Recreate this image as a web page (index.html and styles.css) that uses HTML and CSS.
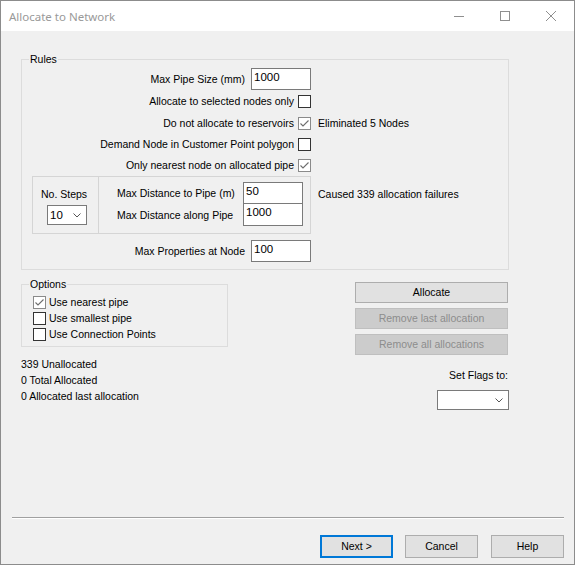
FILE: index.html
```html
<!DOCTYPE html>
<html>
<head>
<meta charset="utf-8">
<title>Allocate to Network</title>
<link rel="stylesheet" href="styles.css">
</head>
<body>
<div class="window">
  <div class="titlebar">
    <span class="title">Allocate to Network</span>
    <div class="controls">
      <span class="ctl"><svg width="10" height="10" viewBox="0 0 10 10"><line x1="0" y1="5.5" x2="10" y2="5.5"/></svg></span>
      <span class="ctl"><svg width="10" height="10" viewBox="0 0 10 10"><rect x="0.5" y="0.5" width="9" height="9"/></svg></span>
      <span class="ctl"><svg width="10" height="10" viewBox="0 0 10 10"><path d="M0 0L10 10M10 0L0 10"/></svg></span>
    </div>
  </div>

  <div class="content">
    <div class="group rules">
      <div class="group-title">Rules</div>

      <div class="row r1">
        <div class="lcol"><span class="lbl">Max Pipe Size (mm)</span><div class="input">1000</div></div>
      </div>
      <div class="row r2">
        <div class="lcol"><span class="lbl-cb">Allocate to selected nodes only</span><span class="cb"></span></div>
      </div>
      <div class="row r3">
        <div class="lcol"><span class="lbl-cb">Do not allocate to reservoirs</span><span class="cb on"><svg width="11" height="11" viewBox="0 0 11 11"><path d="M1.5 5.5L4 8L9.5 2.5"/></svg></span></div>
        <span class="note">Eliminated 5 Nodes</span>
      </div>
      <div class="row r4">
        <div class="lcol"><span class="lbl-cb">Demand Node in Customer Point polygon</span><span class="cb"></span></div>
      </div>
      <div class="row r5">
        <div class="lcol"><span class="lbl-cb">Only nearest node on allocated pipe</span><span class="cb on"><svg width="11" height="11" viewBox="0 0 11 11"><path d="M1.5 5.5L4 8L9.5 2.5"/></svg></span></div>
      </div>

      <div class="steps-row">
        <div class="stepbox">
          <div class="stepcell">
            <div class="steps-lbl">No. Steps</div>
            <div class="combo steps-combo"><span>10</span><svg width="8" height="5" viewBox="0 0 8 5"><path d="M0.5 0.5L4 4L7.5 0.5"/></svg></div>
          </div>
          <div class="distcell">
            <span class="glbl">Max Distance to Pipe (m)</span>
            <div class="input">50</div>
            <span class="glbl">Max Distance along Pipe</span>
            <div class="input second">1000</div>
          </div>
        </div>
        <span class="note fail">Caused 339 allocation failures</span>
      </div>

      <div class="row r6">
        <div class="lcol"><span class="lbl">Max Properties at Node</span><div class="input">100</div></div>
      </div>
    </div>

    <div class="lower">
      <div class="leftcol">
        <div class="group options">
          <div class="group-title">Options</div>
          <div class="opts">
            <div class="opt"><span class="cb on"><svg width="11" height="11" viewBox="0 0 11 11"><path d="M1.5 5.5L4 8L9.5 2.5"/></svg></span><span>Use nearest pipe</span></div>
            <div class="opt"><span class="cb"></span><span>Use smallest pipe</span></div>
            <div class="opt"><span class="cb"></span><span>Use Connection Points</span></div>
          </div>
        </div>
        <div class="status">
          <div>339 Unallocated</div>
          <div>0 Total Allocated</div>
          <div>0 Allocated last allocation</div>
        </div>
      </div>
      <div class="rightcol">
        <div class="btn wide">Allocate</div>
        <div class="btn wide disabled">Remove last allocation</div>
        <div class="btn wide disabled">Remove all allocations</div>
        <div class="flags-lbl">Set Flags to:</div>
        <div class="combo flags-combo"><span></span><svg width="8" height="5" viewBox="0 0 8 5"><path d="M0.5 0.5L4 4L7.5 0.5"/></svg></div>
      </div>
    </div>
  </div>

  <div class="footer">
    <div class="sep"></div>
    <div class="btns">
      <div class="btn fbtn default">Next &gt;</div>
      <div class="btn fbtn">Cancel</div>
      <div class="btn fbtn help">Help</div>
    </div>
  </div>
</div>
</body>
</html>
```

FILE: styles.css
```css
html, body {
  margin: 0;
  padding: 0;
  background: #f0f0f0;
}

body {
  font-family: "Liberation Sans", Arial, sans-serif;
  font-size: 10.5px;
  line-height: 13px;
  color: #000;
}

.window {
  width: 575px;
  height: 565px;
  box-sizing: border-box;
  border: 1px solid #8c8c8c;
  background: #f0f0f0;
  display: flex;
  flex-direction: column;
  overflow: hidden;
}

/* title bar */
.titlebar {
  flex: none;
  height: 30px;
  background: #fff;
  display: flex;
  align-items: center;
}

.title {
  flex: 1;
  padding-left: 8px;
  font-family: "Noto Sans", "Open Sans", sans-serif;
  font-size: 11.5px;
  color: #999;
}

.controls {
  display: flex;
  align-self: stretch;
}

.ctl {
  width: 46px;
  display: flex;
  align-items: center;
  justify-content: center;
}

.ctl svg {
  stroke: #8f8f8f;
  stroke-width: 1;
  fill: none;
  display: block;
}

/* content */
.content {
  flex: 1;
  padding-left: 20px;
}

.group {
  box-sizing: border-box;
  border: 1px solid #dcdcdc;
  display: flex;
  flex-direction: column;
}

.group-title {
  align-self: flex-start;
  height: 13px;
  line-height: 13px;
  margin: -7px 0 0 7px;
  padding: 0 1px;
  background: #f0f0f0;
}

.rules {
  margin-top: 28px;
  width: 488px;
  padding-bottom: 7px;
}

.row {
  display: flex;
  align-items: center;
}

.lcol {
  width: 289px;
  display: flex;
  justify-content: flex-end;
  align-items: center;
}

.r1 { height: 22px; margin-top: 2px; }
.r2 { height: 22px; }
.r3 { height: 22px; }
.r4 { height: 21px; }
.r5 { height: 21px; }
.r6 { height: 22px; margin-top: 6px; }

.lbl { margin-right: 6px; }
.lbl-cb { margin-right: 4px; }

.note { margin-left: 7px; }

.input {
  box-sizing: border-box;
  width: 60px;
  height: 22px;
  border: 1px solid #7a7a7a;
  background: #fff;
  padding: 2px 0 0 2px;
  line-height: 13px;
  font-size: 11.5px;
}

.cb {
  box-sizing: border-box;
  width: 13px;
  height: 13px;
  border: 1px solid #333;
  background: #fff;
  display: inline-block;
  flex: none;
}

.cb svg {
  display: block;
  fill: none;
  stroke: #6d6d6d;
  stroke-width: 1.1;
}

.cb.on {
  border-color: #8a8a8a;
}

/* steps box */
.steps-row {
  display: flex;
  align-items: flex-start;
  margin-left: 10px;
}

.stepbox {
  box-sizing: border-box;
  width: 279px;
  height: 58px;
  border: 1px solid #d5d5d5;
  display: flex;
}

.stepcell {
  flex: none;
  box-sizing: border-box;
  border-right: 1px solid #d5d5d5;
  width: 66px;
  padding: 11px 0 0 8px;
}

.steps-lbl {
  line-height: 13px;
  height: 13px;
}

.combo {
  box-sizing: border-box;
  height: 20px;
  border: 1px solid #7a7a7a;
  background: #fff;
  display: flex;
  align-items: center;
  justify-content: space-between;
  padding: 0 5px 0 2px;
  font-size: 11.5px;
}

.combo svg {
  display: block;
  fill: none;
  stroke: #555;
  stroke-width: 1;
}

.steps-combo {
  width: 40px;
  margin: 4px 0 0 6px;
}

.distcell {
  flex: 1;
  padding: 5px 0 0 18px;
  display: grid;
  grid-template-columns: 126px 60px;
  grid-template-rows: 22px 22px;
}

.glbl {
  align-self: center;
}

.input.second {
  margin-top: -1px;
  height: 23px;
}

.note.fail {
  padding-top: 12px;
}

/* lower area */
.lower {
  display: flex;
  margin-top: 12px;
}

.leftcol {
  width: 334px;
  flex: none;
}

.options {
  margin-top: 2px;
  width: 207px;
  height: 63px;
}

.opts {
  margin-top: 3px;
  padding-left: 11px;
}

.opt {
  height: 16px;
  display: flex;
  align-items: center;
  gap: 3px;
}

.status {
  margin-top: 9px;
  line-height: 16px;
}

.rightcol {
  width: 153px;
  display: flex;
  flex-direction: column;
}

.btn {
  box-sizing: border-box;
  background: #e1e1e1;
  border: 1px solid #adadad;
  display: flex;
  align-items: center;
  justify-content: center;
  color: #000;
}

.btn.wide {
  height: 21px;
  margin-bottom: 5px;
}

.btn.wide.disabled {
  background: #cccccc;
  border-color: #bfbfbf;
  color: #8d8d8d;
}

.flags-lbl {
  margin-top: 9px;
  text-align: right;
}

.flags-combo {
  align-self: flex-end;
  width: 72px;
  margin-top: 8px;
  margin-right: -1px;
}

/* footer */
.footer {
  flex: none;
  padding: 0 10px 6px 11px;
}

.sep {
  border-top: 1px solid #a0a0a0;
  border-bottom: 1px solid #fff;
}

.btns {
  display: flex;
  justify-content: flex-end;
  margin-top: 16px;
}

.fbtn {
  width: 73px;
  height: 23px;
  margin-left: 12px;
}

.fbtn.help {
  margin-left: 13px;
}

.fbtn.default {
  border: 2px solid #0078d7;
}
```
